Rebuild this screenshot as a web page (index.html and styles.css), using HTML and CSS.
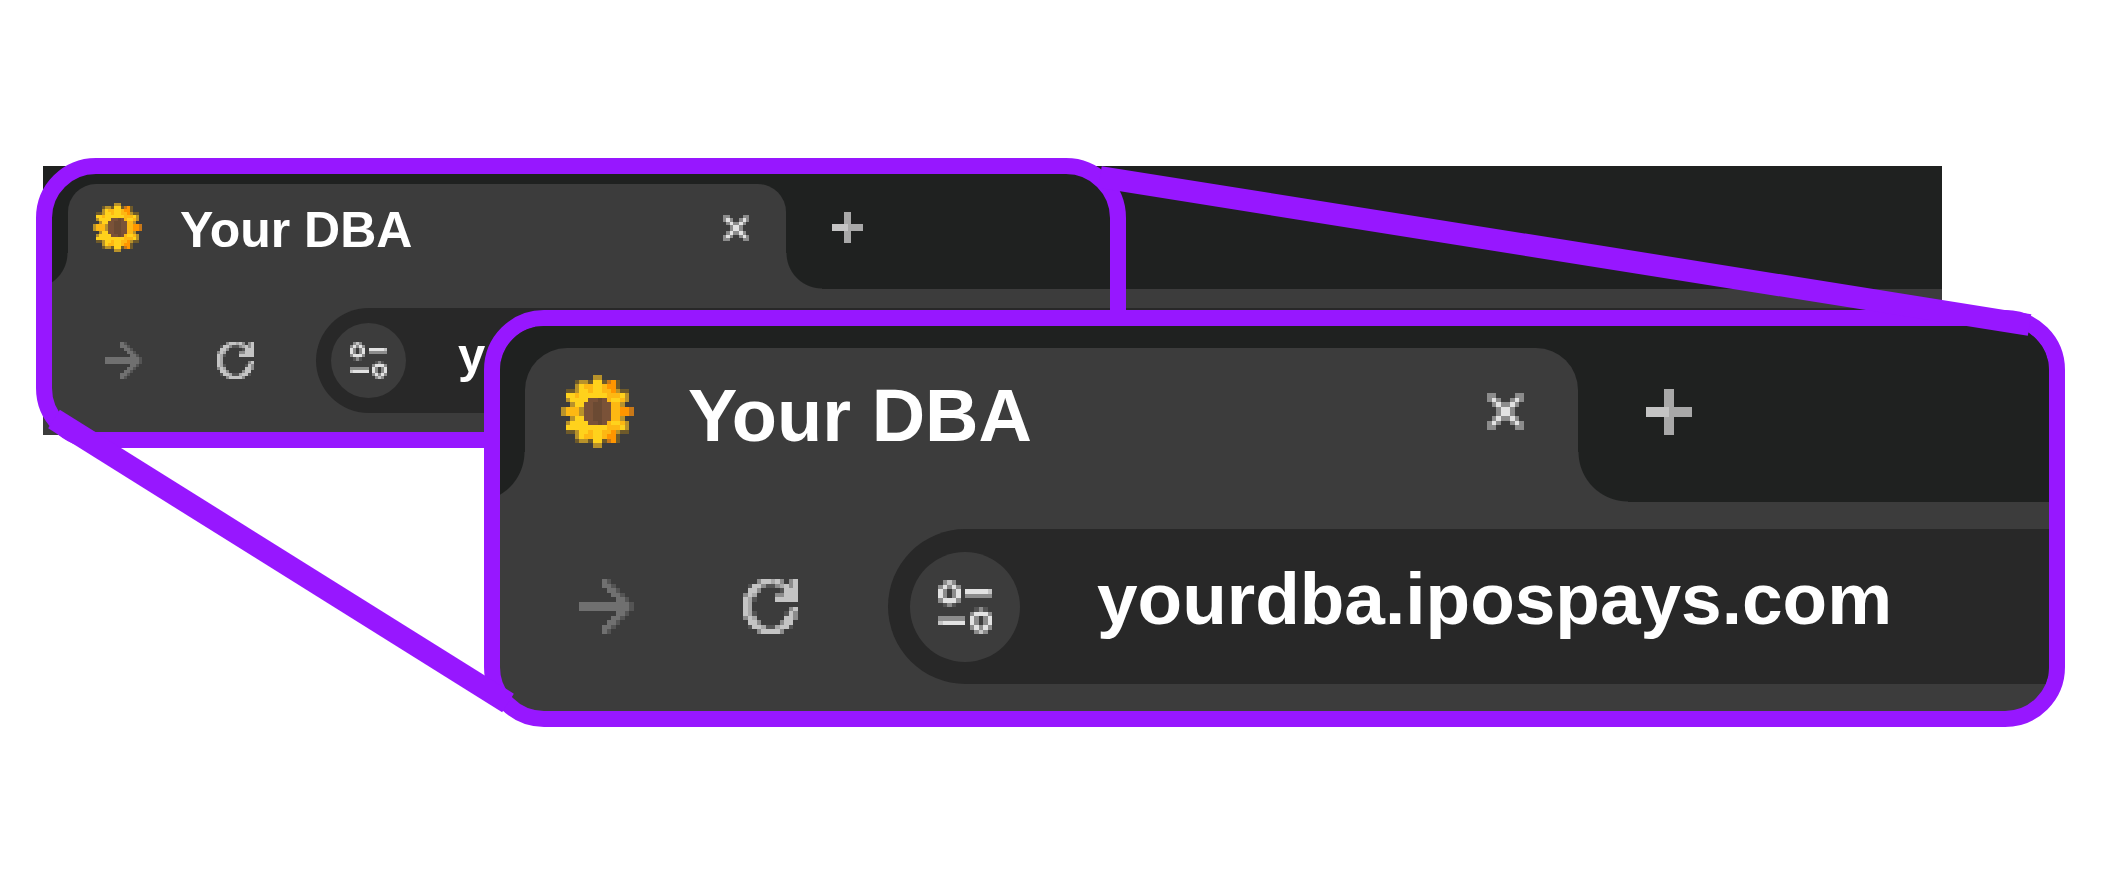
FILE: index.html
```html
<!DOCTYPE html>
<html lang="en">
<head>
    <meta charset="UTF-8">
    <meta name="viewport" content="width=device-width, initial-scale=1.0">
    <title>Your DBA</title>
    <link rel="stylesheet" href="styles.css">
</head>
<body>

<main class="figure">
    <!-- Browser window -->
    <section class="browser">
        <div class="tab-strip">
            <div class="tab">
                <svg class="favicon" data-icon="flower"></svg>
                <span class="title">Your DBA</span>
                <button class="close" type="button" aria-label="Close tab"><svg data-icon="close"></svg></button>
            </div>
            <button class="new-tab" type="button" aria-label="New tab"><svg data-icon="plus"></svg></button>
        </div>
        <div class="toolbar">
            <button class="tool forward" type="button" aria-label="Forward"><svg data-icon="forward"></svg></button>
            <button class="tool reload" type="button" aria-label="Reload"><svg data-icon="reload"></svg></button>
            <div class="address">
                <button class="site-info" type="button" aria-label="Site information"><svg data-icon="tune"></svg></button>
                <input class="url" type="text" aria-label="Address" value="yourdba.ipospays.com">
            </div>
        </div>
    </section>

    <div class="outline"></div>

    <!-- Enlarged part of the window -->
    <section class="browser zoomed">
        <div class="tab-strip">
            <div class="tab">
                <svg class="favicon" data-icon="flower"></svg>
                <span class="title">Your DBA</span>
                <button class="close" type="button" aria-label="Close tab"><svg data-icon="close"></svg></button>
            </div>
            <button class="new-tab" type="button" aria-label="New tab"><svg data-icon="plus"></svg></button>
        </div>
        <div class="toolbar">
            <button class="tool forward" type="button" aria-label="Forward"><svg data-icon="forward"></svg></button>
            <button class="tool reload" type="button" aria-label="Reload"><svg data-icon="reload"></svg></button>
            <div class="address">
                <button class="site-info" type="button" aria-label="Site information"><svg data-icon="tune"></svg></button>
                <input class="url" type="text" aria-label="Address" value="yourdba.ipospays.com">
            </div>
        </div>
    </section>

    <svg class="connectors">
        <line x1="1100" y1="177" x2="96.6%" y2="325" />
        <line x1="54" y1="419" x2="508" y2="703" />
    </svg>
</main>

<script src="icons.js"></script>
</body>
</html>
```
FILE: styles.css
```css
body {
    font-family: 'Liberation Sans', Arial, sans-serif;
    background-color: #fff;
    margin: 0;
}
button {
    display: block;
    flex: none;
    margin: 0;
    padding: 0;
    border: none;
    background: none;
    cursor: pointer;
}
svg {
    display: block;
    width: 100%;
    height: 100%;
}
.figure {
    position: relative;
    min-height: 100vh;
    padding: 166px 159px 0 43px;
    box-sizing: border-box;
    overflow: hidden;
}

/* Browser window */
.browser {
    --tab-width: 718px;
    --tab-height: 105px;
    --tab-radius: 28px;
    --flare: 36px;
    --favicon: 49px;
    --tool: 37px;
    background-color: #3c3c3c;
    overflow: hidden;
}
.tab-strip {
    display: flex;
    padding: 18px 0 0 25px;
    background-color: #1f2120;
}
.tab {
    position: relative;
    display: flex;
    align-items: center;
    box-sizing: border-box;
    width: var(--tab-width);
    height: var(--tab-height);
    padding: 0 37px 18px 25px;
    background-color: #3c3c3c;
    border-radius: var(--tab-radius) var(--tab-radius) 0 0;
}
/* Curved feet of the tab */
.tab::before,
.tab::after {
    content: "";
    position: absolute;
    bottom: 0;
    width: var(--flare);
    height: var(--flare);
}
.tab::before {
    right: 100%;
    background: radial-gradient(circle at 0 0, transparent calc(var(--flare) - 1px), #3c3c3c var(--flare));
}
.tab::after {
    left: 100%;
    background: radial-gradient(circle at 100% 0, transparent calc(var(--flare) - 1px), #3c3c3c var(--flare));
}
.favicon {
    flex: none;
    width: var(--favicon);
    height: var(--favicon);
}
.title {
    flex: 1;
    padding: 4px 0 0 38px;
    color: #fff;
    font-size: 50px;
    font-weight: bold;
    line-height: 1;
    white-space: nowrap;
}
.close {
    width: 26px;
    height: 26px;
}
.new-tab {
    width: 31px;
    height: 31px;
    margin: 28px 0 0 46px;
}
.toolbar {
    display: flex;
    align-items: center;
    padding: 19px 0 22px 62px;
}
.tool {
    width: var(--tool);
    height: var(--tool);
}
.reload {
    margin: 0 62px 0 75px;
}
.address {
    display: flex;
    flex: 1;
    align-items: center;
    box-sizing: border-box;
    min-width: 0;
    height: 105px;
    padding-left: 15px;
    background-color: #282828;
    border-radius: 53px 0 0 53px;
}
.site-info {
    width: 75px;
    height: 75px;
    padding: 19px;
    border-radius: 50%;
    background-color: #3c3c3c;
}
.url {
    flex: 1;
    min-width: 0;
    padding: 0 0 12px 52px;
    border: none;
    outline: none;
    background: none;
    color: #fff;
    font-family: inherit;
    font-size: 49px;
    font-weight: bold;
}

/* Highlight frame around the zoomed part */
.outline {
    position: absolute;
    left: 36px;
    top: 158px;
    width: 1090px;
    height: 290px;
    box-sizing: border-box;
    border: 16px solid #9717ff;
    border-radius: 60px;
}

/* Zoomed window */
.zoomed {
    --tab-width: 1053px;
    --tab-height: 154px;
    --tab-radius: 42px;
    --flare: 50px;
    --favicon: 73px;
    --tool: 55px;
    position: absolute;
    left: 484px;
    right: 36px;
    top: 310px;
    border: 16px solid #9717ff;
    border-radius: 60px;
}
.zoomed .tab-strip {
    padding: 22px 0 0 25px;
}
.zoomed .tab {
    padding: 0 54px 27px 36px;
}
.zoomed .title {
    padding: 8px 0 0 54px;
    font-size: 74px;
}
.zoomed .close {
    width: 37px;
    height: 37px;
}
.zoomed .new-tab {
    width: 46px;
    height: 46px;
    margin: 41px 0 0 68px;
}
.zoomed .toolbar {
    padding: 27px 0 27px 79px;
}
.zoomed .reload {
    margin: 0 90px 0 109px;
}
.zoomed .address {
    height: 155px;
    padding-left: 22px;
    border-radius: 78px 0 0 78px;
}
.zoomed .site-info {
    width: 110px;
    height: 110px;
    padding: 28px;
}
.zoomed .url {
    padding: 0 0 16px 77px;
    font-size: 73px;
}

.connectors {
    position: absolute;
    left: 0;
    top: 0;
    pointer-events: none;
    stroke: #9717ff;
    stroke-width: 22px;
}
```
FILE: icons.js
```js
// Pixel icons, one character per pixel
const colors = {
    1: '#545454', 2: '#8c8c8c', 3: '#c4c4c4', 4: '#e2e2e2', 5: '#707070', 6: '#a8a8a8',
    k: '#6e5a2a', g: '#b8922a', y: '#ffd21c', a: '#fdb813', o: '#ff9500', p: '#c87818',
    b: '#6b4a33', c: '#7a5238'
};

const icons = {
    flower: [
        '.......gg.......',
        '...kggkyykpok...',
        '...gyaayyaook...',
        '.kkgyyayyaaogkk.',
        '.yyayyyyyyaaayg.',
        '.gyyyyccbcayyag.',
        '..gyyccbbccaag..',
        'gaaagccbbccaaoop',
        'gaaagccbbccaaoop',
        '..gyyccbbccaag..',
        '.gyyyyccbcayyag.',
        '.yyyyyyyyyaaayg.',
        '.kkgyyayyaaogkk.',
        '...gyaayyaook...',
        '...kggkyykpok...',
        '.......gg.......'
    ],
    forward: [
        '.....51.....',
        '.....551....',
        '......551...',
        '.......551..',
        '........551.',
        '555555555551',
        '555555555551',
        '........551.',
        '.......551..',
        '......551...',
        '.....551....',
        '.....51.....'
    ],
    reload: [
        '...233632.23',
        '.13321126323',
        '.332....1333',
        '236....22333',
        '361....33333',
        '36..........',
        '36........23',
        '361......132',
        '236......332',
        '.332....233.',
        '.1336116331.',
        '...233332...'
    ],
    tune: [
        '.232........',
        '24242.......',
        '42.24.444443',
        '42.24.222222',
        '24442.......',
        '.121........',
        '........121.',
        '.......24442',
        '222222.42.24',
        '344444.42.24',
        '.......24242',
        '........232.'
    ],
    close: [
        '22....22',
        '242..242',
        '.242242.',
        '..2442..',
        '..2442..',
        '.242242.',
        '242..242',
        '22....22'
    ],
    plus: [
        '....66....',
        '....66....',
        '....66....',
        '....66....',
        '3333366666',
        '3333366666',
        '....66....',
        '....66....',
        '....66....',
        '....66....'
    ]
};

document.querySelectorAll('[data-icon]').forEach(svg => {
    const rows = icons[svg.dataset.icon];
    svg.setAttribute('viewBox', `0 0 ${rows.length} ${rows.length}`);
    svg.setAttribute('shape-rendering', 'crispEdges');
    svg.innerHTML = rows.map((row, y) =>
        [...row].map((c, x) => c === '.' ? '' :
            `<rect x="${x}" y="${y}" width="1" height="1" fill="${colors[c]}"/>`).join('')
    ).join('');
});
```
